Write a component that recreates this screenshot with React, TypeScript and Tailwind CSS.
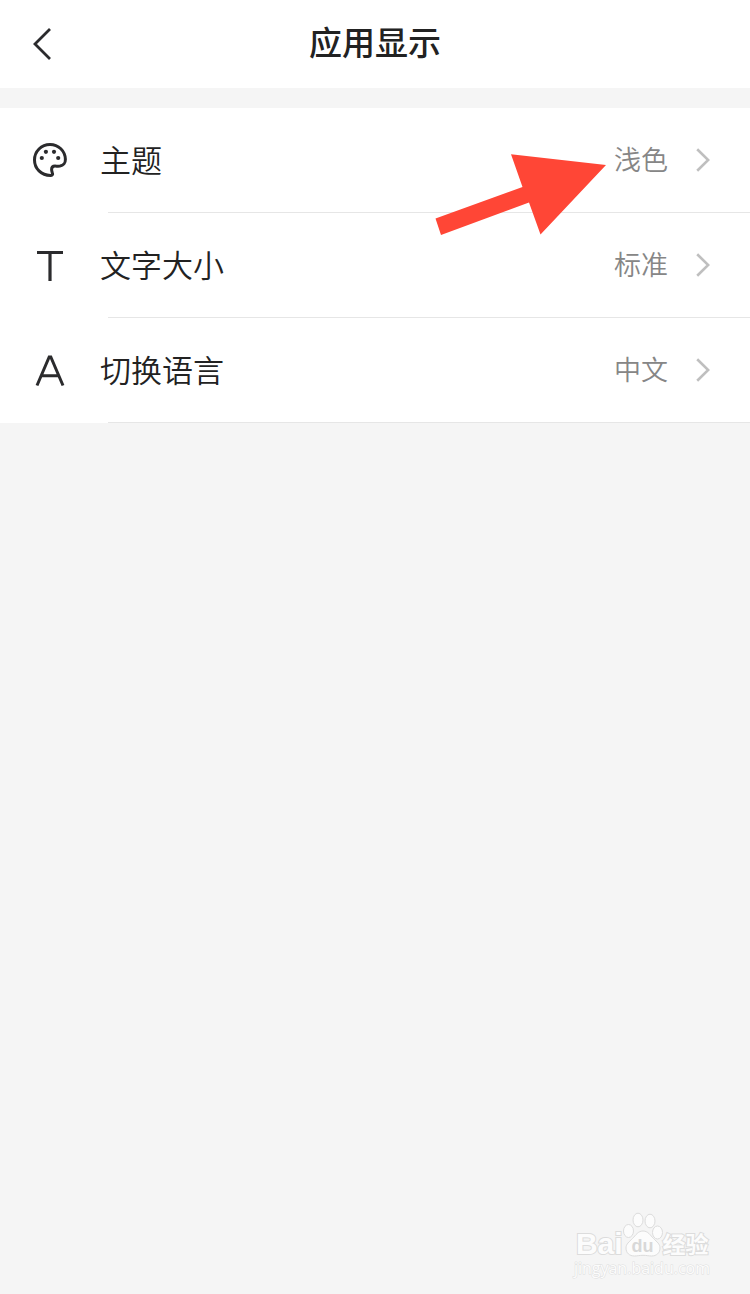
import type { ReactNode } from "react";

type SettingRowProps = {
  icon: ReactNode;
  label: string;
  value: string;
};

function BackIcon() {
  return (
    <svg width="20" height="32" viewBox="0 0 20 32" fill="none" aria-hidden="true">
      <path d="M18 1 3 16l15 15" stroke="#2b2b2d" strokeWidth="2.8" />
    </svg>
  );
}

function ChevronIcon() {
  return (
    <svg width="14" height="24" viewBox="0 0 14 24" fill="none" aria-hidden="true">
      <path d="M1.2 1.2 12.2 12 1.2 22.8" stroke="#bfbfbf" strokeWidth="2.6" />
    </svg>
  );
}

function PaletteIcon() {
  return (
    <svg width="36" height="36" viewBox="0 0 36 36" fill="none" aria-hidden="true">
      <path
        d="M18 2.5C9.4 2.5 2.5 9.4 2.5 18c0 8.500 6.700 15.500 16 15.500 1.500 0 2.500-.8 2-2.200-.4-1.300-.9-2.300-.9-3.700 0-2.500 1.200-3.500 3.400-3.500 1.800 0 3 .2 5 0 3.300-.5 5.500-3.200 5.400-6.700C33.200 8.900 26.500 2.500 18 2.500Z"
        stroke="#2b2b2d"
        strokeWidth="3"
        strokeLinejoin="round"
      />
      <g fill="#2b2b2d">
        <circle cx="9.8" cy="16" r="2.1" />
        <circle cx="13.9" cy="9.8" r="2.1" />
        <circle cx="22" cy="9.8" r="2.1" />
        <circle cx="26.2" cy="16" r="2.1" />
      </g>
    </svg>
  );
}

function TextSizeIcon() {
  return (
    <svg width="36" height="36" viewBox="0 0 36 36" fill="none" aria-hidden="true">
      <path d="M5 5.5h26M18 5.5V34" stroke="#2b2b2d" strokeWidth="3.2" />
    </svg>
  );
}

function LanguageIcon() {
  return (
    <svg width="36" height="36" viewBox="0 0 36 36" fill="none" aria-hidden="true">
      <path
        d="M5 33.500 17.200 5h1.600L31 33.500M9.500 23.700h17"
        stroke="#2b2b2d"
        strokeWidth="3"
      />
    </svg>
  );
}

function SettingRow({ icon, label, value }: SettingRowProps) {
  return (
    <li>
      <button
        type="button"
        className="flex h-[104px] w-full cursor-pointer items-center pr-10 pl-8 text-left"
      >
        {icon}
        <span className="ml-8 flex-1 pb-[3px] text-[31px] leading-10 font-[350] text-[#222222]">
          {label}
        </span>
        <span className="mr-7 pb-[3px] text-[27px] leading-10 font-[350] text-[#868686]">
          {value}
        </span>
        <ChevronIcon />
      </button>
      <div className="ml-[108px] h-px bg-[#e6e6e6]" />
    </li>
  );
}

function PointerArrow() {
  return (
    <svg
      width="172"
      height="84"
      viewBox="0 0 172 84"
      className="pointer-events-none absolute top-[44px] right-[143px]"
      aria-hidden="true"
    >
      <path
        d="M.5 66.500 87.500 35 76 2.300 171 13 105.500 82.500 94 50.500 6 83Z"
        fill="#ff4636"
      />
    </svg>
  );
}

function Watermark() {
  return (
    <div className="pointer-events-none absolute right-10 bottom-4 font-['Open_Sans','Noto_Sans_CJK_SC',sans-serif] text-[#fcfcfc]">
      <div className="flex items-end font-bold">
        <span className="pl-[2px] font-['Liberation_Sans',sans-serif] text-[30px] leading-7 [paint-order:stroke] [-webkit-text-stroke:2px_#dcdcdc]">
          Bai
        </span>
        <span className="relative">
          <svg width="40" height="46" viewBox="0 0 40 46" aria-hidden="true">
            <g fill="#fcfcfc" stroke="#dcdcdc">
              <ellipse cx="5.5" cy="19" rx="5" ry="6.5" />
              <ellipse cx="15" cy="8" rx="5" ry="6.8" />
              <ellipse cx="27" cy="9" rx="5" ry="6.8" />
              <ellipse cx="34.5" cy="20.5" rx="5" ry="6.5" />
              <path d="M20 19c5 0 7 4 10.500 7.500C34 30 37 32 37 36c0 5-3.500 8-8.500 8-3 0-5-.7-8.500-.7s-5.500.7-8.500.7C6.500 44 3 41 3 36c0-4 3-6 6.500-9.500C13 23 15 19 20 19Z" />
            </g>
          </svg>
          <span className="absolute inset-x-0 bottom-0 text-center font-['Liberation_Sans',sans-serif] text-[18px] leading-6 text-[#d8d8d8]">
            du
          </span>
        </span>
        <span className="text-[23px] leading-7 [paint-order:stroke] [-webkit-text-stroke:2px_#dcdcdc]">
          经验
        </span>
      </div>
      <p className="text-[16px] leading-5 font-medium [paint-order:stroke] [-webkit-text-stroke:1px_#dedede]">
        jingyan.baidu.com
      </p>
    </div>
  );
}

export default function App() {
  return (
    <div className="relative min-h-screen bg-[#f5f5f5] font-['Noto_Sans_CJK_SC',sans-serif]">
      <header className="grid h-[88px] grid-cols-[1fr_auto_1fr] items-center bg-white px-8">
        <button type="button" aria-label="返回" className="cursor-pointer justify-self-start">
          <BackIcon />
        </button>
        <h1 className="pb-[6px] text-[33px] leading-10 font-medium text-[#222222]">
          应用显示
        </h1>
      </header>
      <main className="relative mt-5 bg-white">
        <ul>
          <SettingRow icon={<PaletteIcon />} label="主题" value="浅色" />
          <SettingRow icon={<TextSizeIcon />} label="文字大小" value="标准" />
          <SettingRow icon={<LanguageIcon />} label="切换语言" value="中文" />
        </ul>
        <PointerArrow />
      </main>
      <Watermark />
    </div>
  );
}
